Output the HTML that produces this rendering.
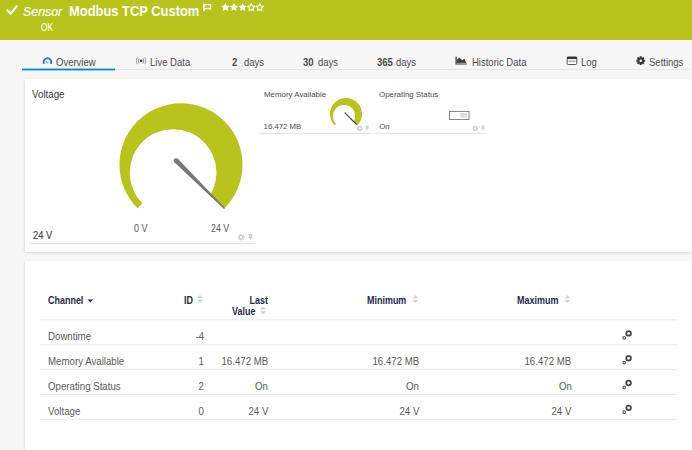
<!DOCTYPE html>
<html><head><meta charset="utf-8"><style>
html,body{margin:0;padding:0;}
body{width:692px;height:450px;overflow:hidden;background:#f7f7f7;position:relative;font-family:"Liberation Sans", sans-serif;}
.t{position:absolute;white-space:nowrap;}
</style></head><body>
<div style="position:absolute;left:0px;top:0px;width:692px;height:40px;background:#b8c31b;"></div>
<svg style="position:absolute;left:0px;top:0px" width="692" height="40"><path d="M6.8,9.6 L10.9,13.7 L17,5.6" fill="none" stroke="#fff" stroke-width="2.2"/><path d="M203.9,3.8 V11" stroke="#fff" stroke-width="1.6"/><path d="M204.5,4.9 Q207.5,4.1 210.5,4.9 V8.8 Q207.5,8.1 204.5,8.8" fill="none" stroke="#fff" stroke-width="1.5"/><polygon points="225.40,3.00 226.69,5.62 229.58,6.04 227.49,8.08 227.99,10.96 225.40,9.60 222.81,10.96 223.31,8.08 221.22,6.04 224.11,5.62" fill="#fff"/><polygon points="234.00,3.00 235.29,5.62 238.18,6.04 236.09,8.08 236.59,10.96 234.00,9.60 231.41,10.96 231.91,8.08 229.82,6.04 232.71,5.62" fill="#fff"/><polygon points="242.60,3.00 243.89,5.62 246.78,6.04 244.69,8.08 245.19,10.96 242.60,9.60 240.01,10.96 240.51,8.08 238.42,6.04 241.31,5.62" fill="#fff"/><polygon points="251.20,3.70 252.35,5.92 254.81,6.33 253.05,8.10 253.43,10.57 251.20,9.45 248.97,10.57 249.35,8.10 247.59,6.33 250.05,5.92" fill="none" stroke="#fff" stroke-width="1.15" stroke-linejoin="round"/><polygon points="259.80,3.70 260.95,5.92 263.41,6.33 261.65,8.10 262.03,10.57 259.80,9.45 257.57,10.57 257.95,8.10 256.19,6.33 258.65,5.92" fill="none" stroke="#fff" stroke-width="1.15" stroke-linejoin="round"/></svg>
<div class="t" style="left:23.30px;top:5.06px;font-size:13.4px;line-height:13.4px;color:#fff;font-weight:400;-webkit-text-stroke:0.2px #fff;transform:scaleX(0.925);transform-origin:0 0;font-style:italic;">Sensor</div>
<div class="t" style="left:68.80px;top:4.92px;font-size:13.8px;line-height:13.8px;color:#fff;font-weight:700;transform:scaleX(0.936);transform-origin:0 0;">Modbus TCP Custom</div>
<div class="t" style="left:40.90px;top:22.77px;font-size:10.2px;line-height:10.2px;color:#fff;font-weight:400;transform:scaleX(0.81);transform-origin:0 0;-webkit-text-stroke:0.1px #fff;">OK</div>
<div style="position:absolute;left:22px;top:69px;width:670px;height:1px;background:#e6e6e6;"></div>
<svg style="position:absolute;left:0px;top:60px" width="692" height="20" viewBox="0 60 692 20"><rect x="22" y="68.6" width="93" height="1.8" fill="#0b83cf"/></svg>
<div class="t" style="left:56.30px;top:57.50px;font-size:10.4px;line-height:10.4px;color:#4a4a4a;font-weight:400;transform:scaleX(0.915);transform-origin:0 0;">Overview</div>
<div class="t" style="left:149.60px;top:57.50px;font-size:10.4px;line-height:10.4px;color:#4a4a4a;font-weight:400;transform:scaleX(0.915);transform-origin:0 0;">Live Data</div>
<div class="t" style="left:231.60px;top:57.50px;font-size:10.4px;line-height:10.4px;color:#4a4a4a;font-weight:700;transform:scaleX(0.915);transform-origin:0 0;">2</div>
<div class="t" style="left:243.80px;top:57.50px;font-size:10.4px;line-height:10.4px;color:#4a4a4a;font-weight:400;transform:scaleX(0.915);transform-origin:0 0;">days</div>
<div class="t" style="left:303.20px;top:57.50px;font-size:10.4px;line-height:10.4px;color:#4a4a4a;font-weight:700;transform:scaleX(0.915);transform-origin:0 0;">30</div>
<div class="t" style="left:317.90px;top:57.50px;font-size:10.4px;line-height:10.4px;color:#4a4a4a;font-weight:400;transform:scaleX(0.915);transform-origin:0 0;">days</div>
<div class="t" style="left:376.80px;top:57.50px;font-size:10.4px;line-height:10.4px;color:#4a4a4a;font-weight:700;transform:scaleX(0.915);transform-origin:0 0;">365</div>
<div class="t" style="left:395.70px;top:57.50px;font-size:10.4px;line-height:10.4px;color:#4a4a4a;font-weight:400;transform:scaleX(0.915);transform-origin:0 0;">days</div>
<div class="t" style="left:471.90px;top:57.50px;font-size:10.4px;line-height:10.4px;color:#4a4a4a;font-weight:400;transform:scaleX(0.915);transform-origin:0 0;">Historic Data</div>
<div class="t" style="left:581.10px;top:57.50px;font-size:10.4px;line-height:10.4px;color:#4a4a4a;font-weight:400;transform:scaleX(0.915);transform-origin:0 0;">Log</div>
<div class="t" style="left:649.00px;top:57.50px;font-size:10.4px;line-height:10.4px;color:#4a4a4a;font-weight:400;transform:scaleX(0.915);transform-origin:0 0;">Settings</div>
<svg style="position:absolute;left:0px;top:40px" width="692" height="40" viewBox="0 40 692 40"><path d="M44.21,63.9 A3.8,3.8 0 1 1 50.79,63.9" fill="none" stroke="#0b83cf" stroke-width="1.7"/><path d="M45.6,61.3 L48.4,63.4" stroke="#6aaee0" stroke-width="1.1"/><circle cx="141.1" cy="60.8" r="1.3" fill="#333"/><path d="M139,58.3 Q137.8,60.8 139,63.3 M143.2,58.3 Q144.4,60.8 143.2,63.3" fill="none" stroke="#7a7a7a" stroke-width="0.9"/><path d="M137.2,57.3 Q135.4,60.8 137.2,64.3 M145,57.3 Q146.8,60.8 145,64.3" fill="none" stroke="#8a8a8a" stroke-width="0.8"/><rect x="455.4" y="56.6" width="1.5" height="8" fill="#555"/><path d="M457,64.5 V59.8 L459.5,57.6 L462,60.2 L464.5,58.8 L466.8,64.5 Z" fill="#3c3c3c"/><rect x="457" y="62.8" width="9.6" height="1.7" fill="#999"/><rect x="567.2" y="57.1" width="9.6" height="7.4" rx="1" fill="none" stroke="#555" stroke-width="1"/><rect x="567" y="56.8" width="10" height="2.2" fill="#333"/><rect x="568.5" y="60.5" width="7" height="1.3" fill="#aaa"/><path d="M643.75,59.44 L643.86,59.74 L645.08,59.65 L645.08,61.75 L643.86,61.66 L643.75,61.96 L643.75,61.96 L643.61,62.26 L644.54,63.05 L643.05,64.54 L642.26,63.61 L641.96,63.75 L641.96,63.75 L641.66,63.86 L641.75,65.08 L639.65,65.08 L639.74,63.86 L639.44,63.75 L639.44,63.75 L639.14,63.61 L638.35,64.54 L636.86,63.05 L637.79,62.26 L637.65,61.96 L637.65,61.96 L637.54,61.66 L636.32,61.75 L636.32,59.65 L637.54,59.74 L637.65,59.44 L637.65,59.44 L637.79,59.14 L636.86,58.35 L638.35,56.86 L639.14,57.79 L639.44,57.65 L639.44,57.65 L639.74,57.54 L639.65,56.32 L641.75,56.32 L641.66,57.54 L641.96,57.65 L641.96,57.65 L642.26,57.79 L643.05,56.86 L644.54,58.35 L643.61,59.14 L643.75,59.44 Z" fill="#333"/><circle cx="640.7" cy="60.7" r="1.3" fill="#f7f7f7"/></svg>
<div style="position:absolute;left:25px;top:79px;width:667px;height:173px;background:#fff;box-shadow:0 0.5px 3px rgba(0,0,0,0.17);"></div>
<div class="t" style="left:32.20px;top:90.23px;font-size:10.0px;line-height:10.0px;color:#383838;font-weight:400;transform:scaleX(0.975);transform-origin:0 0;">Voltage</div>
<svg style="position:absolute;left:0px;top:0px" width="692" height="260"><path d="M181,164.7 L137.51,208.19 A61.5,61.5 0 1 1 224.49,208.19 Z" fill="#b8c31b"/><circle cx="173.1" cy="172.6" r="43.4" fill="#fff"/><circle cx="176.1" cy="160.6" r="2.45" fill="#777"/><path d="M174.38,162.34 L224.01,208.90 L224.99,207.90 L177.82,158.86 Z" fill="#777"/><path d="M346,114 L334.69,125.31 A16,16 0 1 1 357.31,125.31 Z" fill="#b8c31b"/><circle cx="344" cy="116.1" r="11.1" fill="#fff"/><line x1="344.7" y1="112.7" x2="356.7" y2="124.7" stroke="#444" stroke-width="1.2"/><rect x="449.5" y="111.4" width="19.5" height="8" fill="#fff" stroke="#777" stroke-width="0.9"/><rect x="460.3" y="113.1" width="6.7" height="4.4" fill="#dcdcdc"/></svg>
<div class="t" style="left:134.30px;top:224.10px;font-size:10.4px;line-height:10.4px;color:#555;font-weight:400;transform:scaleX(0.86);transform-origin:0 0;">0 V</div>
<div class="t" style="left:211.30px;top:224.10px;font-size:10.4px;line-height:10.4px;color:#555;font-weight:400;transform:scaleX(0.85);transform-origin:0 0;">24 V</div>
<div class="t" style="left:32.70px;top:230.80px;font-size:10.4px;line-height:10.4px;color:#444;font-weight:400;-webkit-text-stroke:0.15px #444;transform:scaleX(0.9);transform-origin:0 0;">24 V</div>
<svg style="position:absolute;left:0px;top:230px" width="692" height="20" viewBox="0 230 692 20"><rect x="29" y="243.05" width="226" height="1.05" fill="#e2e2e2"/></svg>
<div class="t" style="left:263.50px;top:90.54px;font-size:8.1px;line-height:8.1px;color:#4a4a4a;font-weight:400;transform:scaleX(0.975);transform-origin:0 0;">Memory Available</div>
<div class="t" style="left:263.60px;top:122.80px;font-size:7.8px;line-height:7.8px;color:#4a4a4a;font-weight:400;">16.472 MB</div>
<svg style="position:absolute;left:0px;top:125px" width="692" height="20" viewBox="0 125 692 20"><rect x="260" y="132.9" width="111" height="1.05" fill="#e2e2e2"/><rect x="375.3" y="132.9" width="111.5" height="1.05" fill="#e2e2e2"/></svg>
<div class="t" style="left:379.30px;top:90.54px;font-size:8.1px;line-height:8.1px;color:#4a4a4a;font-weight:400;transform:scaleX(0.975);transform-origin:0 0;">Operating Status</div>
<div class="t" style="left:379.20px;top:122.80px;font-size:7.8px;line-height:7.8px;color:#4a4a4a;font-weight:400;">On</div>
<div style="position:absolute;left:25px;top:261px;width:667px;height:189px;background:#fff;box-shadow:0 0.5px 3px rgba(0,0,0,0.17);"></div>
<div class="t" style="left:47.70px;top:295.77px;font-size:10.2px;line-height:10.2px;color:#1d2a48;font-weight:700;transform:scaleX(0.88);transform-origin:0 0;">Channel</div>
<div class="t" style="left:184.00px;top:295.77px;font-size:10.2px;line-height:10.2px;color:#1d2a48;font-weight:700;transform:scaleX(0.88);transform-origin:0 0;">ID</div>
<div class="t" style="right:424.00px;top:295.77px;font-size:10.2px;line-height:10.2px;color:#1d2a48;font-weight:700;transform:scaleX(0.88);transform-origin:100% 0;">Last</div>
<div class="t" style="left:232.00px;top:307.17px;font-size:10.2px;line-height:10.2px;color:#1d2a48;font-weight:700;transform:scaleX(0.88);transform-origin:0 0;">Value</div>
<div class="t" style="left:367.10px;top:295.77px;font-size:10.2px;line-height:10.2px;color:#1d2a48;font-weight:700;transform:scaleX(0.88);transform-origin:0 0;">Minimum</div>
<div class="t" style="left:516.60px;top:295.77px;font-size:10.2px;line-height:10.2px;color:#1d2a48;font-weight:700;transform:scaleX(0.88);transform-origin:0 0;">Maximum</div>
<svg style="position:absolute;left:0px;top:300px" width="692" height="140" viewBox="0 300 692 140"><rect x="40" y="319.30" width="637" height="1.1" fill="#ececec"/><rect x="40" y="344.18" width="637" height="1.1" fill="#ececec"/><rect x="40" y="369.06" width="637" height="1.1" fill="#ececec"/><rect x="40" y="393.94" width="637" height="1.1" fill="#ececec"/><rect x="40" y="418.82" width="637" height="1.1" fill="#ececec"/></svg>
<div class="t" style="left:48.00px;top:332.30px;font-size:10.4px;line-height:10.4px;color:#5a5a5a;font-weight:400;transform:scaleX(0.932);transform-origin:0 0;">Downtime</div>
<div class="t" style="right:488.00px;top:332.30px;font-size:10.4px;line-height:10.4px;color:#5a5a5a;font-weight:400;transform:scaleX(0.932);transform-origin:100% 0;">-4</div>
<div class="t" style="left:48.00px;top:357.10px;font-size:10.4px;line-height:10.4px;color:#5a5a5a;font-weight:400;transform:scaleX(0.932);transform-origin:0 0;">Memory Available</div>
<div class="t" style="right:488.00px;top:357.10px;font-size:10.4px;line-height:10.4px;color:#5a5a5a;font-weight:400;transform:scaleX(0.932);transform-origin:100% 0;">1</div>
<div class="t" style="right:424.10px;top:357.10px;font-size:10.4px;line-height:10.4px;color:#5a5a5a;font-weight:400;transform:scaleX(0.932);transform-origin:100% 0;">16.472 MB</div>
<div class="t" style="right:272.70px;top:357.10px;font-size:10.4px;line-height:10.4px;color:#5a5a5a;font-weight:400;transform:scaleX(0.932);transform-origin:100% 0;">16.472 MB</div>
<div class="t" style="right:120.60px;top:357.10px;font-size:10.4px;line-height:10.4px;color:#5a5a5a;font-weight:400;transform:scaleX(0.932);transform-origin:100% 0;">16.472 MB</div>
<div class="t" style="left:48.00px;top:381.90px;font-size:10.4px;line-height:10.4px;color:#5a5a5a;font-weight:400;transform:scaleX(0.932);transform-origin:0 0;">Operating Status</div>
<div class="t" style="right:488.00px;top:381.90px;font-size:10.4px;line-height:10.4px;color:#5a5a5a;font-weight:400;transform:scaleX(0.932);transform-origin:100% 0;">2</div>
<div class="t" style="right:424.10px;top:381.90px;font-size:10.4px;line-height:10.4px;color:#5a5a5a;font-weight:400;transform:scaleX(0.932);transform-origin:100% 0;">On</div>
<div class="t" style="right:272.70px;top:381.90px;font-size:10.4px;line-height:10.4px;color:#5a5a5a;font-weight:400;transform:scaleX(0.932);transform-origin:100% 0;">On</div>
<div class="t" style="right:120.60px;top:381.90px;font-size:10.4px;line-height:10.4px;color:#5a5a5a;font-weight:400;transform:scaleX(0.932);transform-origin:100% 0;">On</div>
<div class="t" style="left:48.00px;top:406.70px;font-size:10.4px;line-height:10.4px;color:#5a5a5a;font-weight:400;transform:scaleX(0.932);transform-origin:0 0;">Voltage</div>
<div class="t" style="right:488.00px;top:406.70px;font-size:10.4px;line-height:10.4px;color:#5a5a5a;font-weight:400;transform:scaleX(0.932);transform-origin:100% 0;">0</div>
<div class="t" style="right:424.10px;top:406.70px;font-size:10.4px;line-height:10.4px;color:#5a5a5a;font-weight:400;transform:scaleX(0.932);transform-origin:100% 0;">24 V</div>
<div class="t" style="right:272.70px;top:406.70px;font-size:10.4px;line-height:10.4px;color:#5a5a5a;font-weight:400;transform:scaleX(0.932);transform-origin:100% 0;">24 V</div>
<div class="t" style="right:120.60px;top:406.70px;font-size:10.4px;line-height:10.4px;color:#5a5a5a;font-weight:400;transform:scaleX(0.932);transform-origin:100% 0;">24 V</div>
<svg style="position:absolute;left:0px;top:0px" width="692" height="450"><path d="M243.59,236.17 L243.77,236.80 L244.67,236.77 L244.67,237.63 L243.77,237.60 L243.59,238.23 L243.59,238.23 L243.27,238.80 L243.93,239.42 L243.32,240.03 L242.70,239.37 L242.13,239.69 L242.13,239.69 L241.50,239.87 L241.53,240.77 L240.67,240.77 L240.70,239.87 L240.07,239.69 L240.07,239.69 L239.50,239.37 L238.88,240.03 L238.27,239.42 L238.93,238.80 L238.61,238.23 L238.61,238.23 L238.43,237.60 L237.53,237.63 L237.53,236.77 L238.43,236.80 L238.61,236.17 L238.61,236.17 L238.93,235.60 L238.27,234.98 L238.88,234.37 L239.50,235.03 L240.07,234.71 L240.07,234.71 L240.70,234.53 L240.67,233.63 L241.53,233.63 L241.50,234.53 L242.13,234.71 L242.13,234.71 L242.70,235.03 L243.32,234.37 L243.93,234.98 L243.27,235.60 L243.59,236.17 Z" fill="#d0d0d0"/><circle cx="241.1" cy="237.2" r="1.1" fill="#fff"/><path d="M248.13,234.00 H253.07 V234.85 H252.12 V237.04 L253.26,238.18 H247.94 L249.08,237.04 V234.85 H248.13 Z" fill="#d0d0d0"/><path d="M250.60,238.18 V240.27" stroke="#d0d0d0" stroke-width="0.85"/><circle cx="359.7" cy="128.4" r="1.85" fill="none" stroke="#d0d0d0" stroke-width="1.6"/><path d="M365.15,125.80 H369.05 V126.47 H368.30 V128.20 L369.20,129.10 H365.00 L365.90,128.20 V126.47 H365.15 Z" fill="#d0d0d0"/><path d="M367.10,129.10 V130.75" stroke="#d0d0d0" stroke-width="0.68"/><circle cx="475.2" cy="128.4" r="1.85" fill="none" stroke="#d0d0d0" stroke-width="1.6"/><path d="M481.15,125.80 H485.05 V126.47 H484.30 V128.20 L485.20,129.10 H481.00 L481.90,128.20 V126.47 H481.15 Z" fill="#d0d0d0"/><path d="M483.10,129.10 V130.75" stroke="#d0d0d0" stroke-width="0.68"/><path d="M87.70,299.60 L90.40,302.60 L93.10,299.60 Z" fill="#1d2a48"/><path d="M197.00,298.00 L200.00,295.00 L203.00,298.00 Z" fill="#cfcfcf"/><path d="M197.00,299.80 L200.00,302.80 L203.00,299.80 Z" fill="#cfcfcf"/><path d="M260.00,309.50 L263.00,306.50 L266.00,309.50 Z" fill="#cfcfcf"/><path d="M260.00,311.30 L263.00,314.30 L266.00,311.30 Z" fill="#cfcfcf"/><path d="M412.30,298.20 L415.30,295.20 L418.30,298.20 Z" fill="#cfcfcf"/><path d="M412.30,300.00 L415.30,303.00 L418.30,300.00 Z" fill="#cfcfcf"/><path d="M564.30,298.20 L567.30,295.20 L570.30,298.20 Z" fill="#cfcfcf"/><path d="M564.30,300.00 L567.30,303.00 L570.30,300.00 Z" fill="#cfcfcf"/><circle cx="628.6" cy="333.4" r="2.3" fill="none" stroke="#444" stroke-width="1.75"/><circle cx="624.2" cy="337.8" r="1.3" fill="none" stroke="#5a5a5a" stroke-width="1.15"/><circle cx="628.6" cy="358.2" r="2.3" fill="none" stroke="#444" stroke-width="1.75"/><circle cx="624.2" cy="362.6" r="1.3" fill="none" stroke="#5a5a5a" stroke-width="1.15"/><circle cx="628.6" cy="383.0" r="2.3" fill="none" stroke="#444" stroke-width="1.75"/><circle cx="624.2" cy="387.4" r="1.3" fill="none" stroke="#5a5a5a" stroke-width="1.15"/><circle cx="628.6" cy="407.8" r="2.3" fill="none" stroke="#444" stroke-width="1.75"/><circle cx="624.2" cy="412.2" r="1.3" fill="none" stroke="#5a5a5a" stroke-width="1.15"/></svg>
</body></html>
